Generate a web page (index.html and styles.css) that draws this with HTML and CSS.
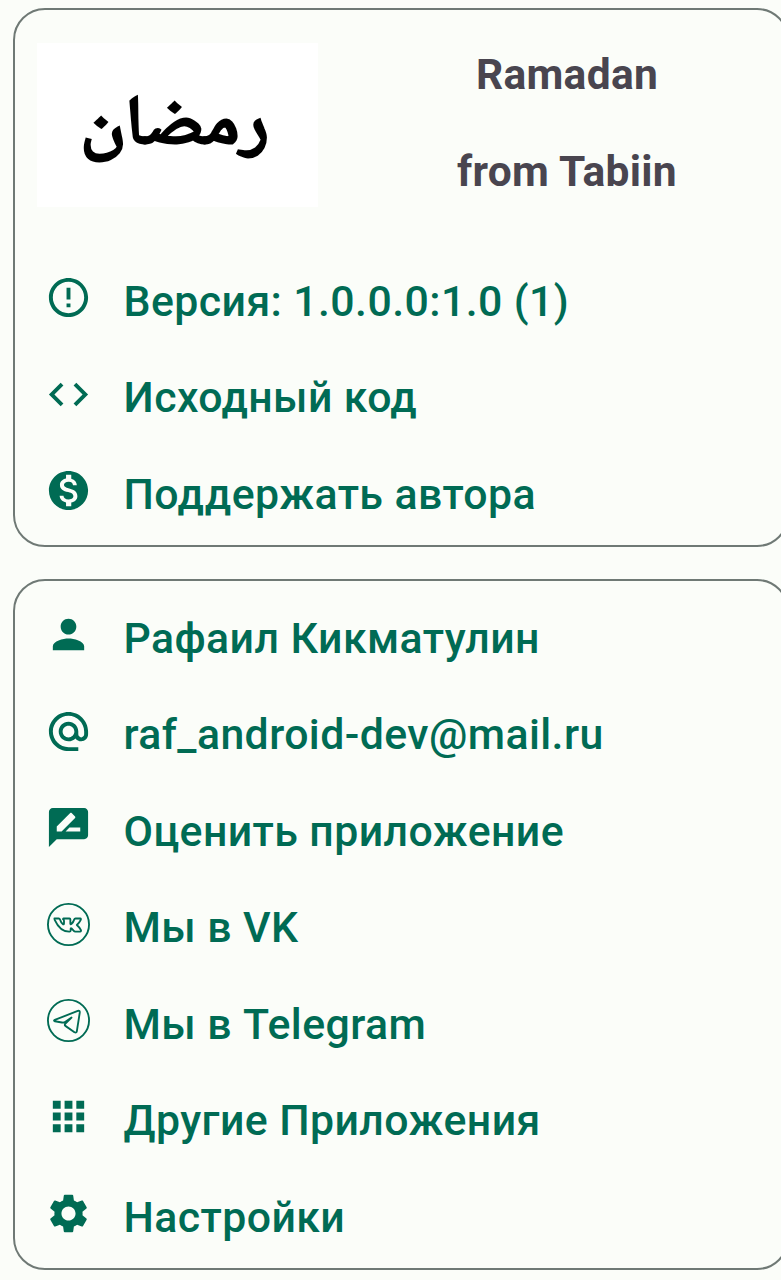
FILE: index.html
```html
<!DOCTYPE html>
<html lang="ru">
<head>
<meta charset="utf-8">
<title>Ramadan</title>
<link rel="stylesheet" href="styles.css">
</head>
<body>
<main class="page">
  <section class="card about">
    <header class="head">
      <div class="logo"><span class="word" lang="ar" dir="rtl">رمضان</span></div>
      <h1 class="title"><span>Ramadan</span><span>from Tabiin</span></h1>
    </header>
    <ul class="list">
      <li class="row"><svg class="icon" viewBox="0 0 24 24"><path d="M11 15h2v2h-2zm0-8h2v6h-2zm.99-5C6.47 2 2 6.48 2 12s4.47 10 9.99 10C17.52 22 22 17.52 22 12S17.52 2 11.99 2zM12 20c-4.42 0-8-3.58-8-8s3.58-8 8-8 8 3.58 8 8-3.58 8-8 8z"/></svg><span class="label">Версия: 1.0.0.0:1.0 (1)</span></li>
      <li class="row"><svg class="icon" viewBox="0 0 24 24"><path d="M9.4 16.6L4.800 12l4.600-4.600L8 6l-6 6 6 6zm5.200 0l4.600-4.600-4.600-4.600L16 6l6 6-6 6z"/></svg><span class="label">Исходный код</span></li>
      <li class="row"><svg class="icon" viewBox="0 0 24 24"><path d="M12 2C6.480 2 2 6.480 2 12s4.480 10 10 10 10-4.480 10-10S17.520 2 12 2zm1.410 16.090V20h-2.670v-1.930c-1.710-.36-3.160-1.460-3.270-3.400h1.960c.1 1.050.82 1.870 2.650 1.870 1.960 0 2.400-.98 2.400-1.590 0-.83-.44-1.610-2.670-2.140-2.480-.6-4.180-1.620-4.180-3.670 0-1.720 1.390-2.840 3.110-3.210V4h2.670v1.950c1.860.45 2.790 1.860 2.850 3.390H14.300c-.05-1.110-.64-1.870-2.220-1.870-1.500 0-2.400.68-2.400 1.640 0 .84.65 1.390 2.670 1.910s4.180 1.390 4.180 3.910c-.01 1.830-1.380 2.830-3.120 3.160z"/></svg><span class="label">Поддержать автора</span></li>
    </ul>
  </section>
  <section class="card links">
    <ul class="list">
      <li class="row"><svg class="icon" viewBox="0 0 24 24"><path d="M12 12c2.210 0 4-1.790 4-4s-1.790-4-4-4-4 1.790-4 4 1.790 4 4 4zm0 2c-2.670 0-8 1.340-8 4v2h16v-2c0-2.660-5.330-4-8-4z"/></svg><span class="label">Рафаил Кикматулин</span></li>
      <li class="row"><svg class="icon" viewBox="0 0 24 24"><path d="M12 2C6.480 2 2 6.480 2 12s4.480 10 10 10h5v-2h-5c-4.340 0-8-3.660-8-8s3.660-8 8-8 8 3.660 8 8v1.430c0 .79-.71 1.570-1.500 1.570s-1.500-.78-1.500-1.570V12c0-2.760-2.240-5-5-5s-5 2.240-5 5 2.240 5 5 5c1.380 0 2.640-.56 3.540-1.470.65.89 1.770 1.470 2.960 1.470 1.970 0 3.500-1.600 3.500-3.570V12c0-5.520-4.480-10-10-10zm0 13c-1.660 0-3-1.340-3-3s1.340-3 3-3 3 1.340 3 3-1.340 3-3 3z"/></svg><span class="label">raf_android-dev@mail.ru</span></li>
      <li class="row"><svg class="icon" viewBox="0 0 24 24"><path d="M20 2H4c-1.100 0-1.990.9-1.990 2L2 22l4-4h14c1.100 0 2-.9 2-2V4c0-1.100-.9-2-2-2zM6 14v-2.470l6.880-6.880c.2-.2.51-.2.71 0l1.770 1.770c.2.2.2.51 0 .71L8.470 14H6zm12 0h-7.500l2-2H18v2z"/></svg><span class="label">Оценить приложение</span></li>
      <li class="row"><svg class="icon line" viewBox="0 0 48 48"><circle cx="24" cy="24" r="21"/><path d="M9.600 17.900h4.400q1 0 1.300 1 1 3.200 3.100 4.900 1 .4 1-1v-2.600q0-1-1-1.600-.2-.6.600-.7h6q.9 0 .9 1v4.400q.2.900 1 .300 2-1.800 3-4.800.3-.9 1.200-.9h4.800q1.200.2.600 1.300-1.300 2.800-4 5.300 2.600 2.200 4.200 5.200.5 1.400-.9 1.600h-4.800q-1 0-1.600-.8l-2.300-2.500q-.9-.7-.9.500v1.900q-.1.900-1.100.900-9.500.3-15.200-12.100-.5-1.200.5-1.300z"/></svg><span class="label">Мы в VK</span></li>
      <li class="row"><svg class="icon line" viewBox="0 0 48 48"><circle cx="24" cy="24" r="21"/><path d="M10 23.400l23.500-9.200q2.300-.7 2 1.800l-3 19q-.5 2-2.400 1l-9.300-6.500q-1-.8-.2-2l6.500-6.500-7 4.700q-1.300.8-2.800.3l-7.200-1.200q-1.700-.6-.1-1.400z"/></svg><span class="label">Мы в Telegram</span></li>
      <li class="row"><svg class="icon" viewBox="0 0 24 24"><path d="M4 8h4V4H4v4zm6 12h4v-4h-4v4zm-6 0h4v-4H4v4zm0-6h4v-4H4v4zm6 0h4v-4h-4v4zm6-10v4h4V4h-4zm-6 4h4V4h-4v4zm6 6h4v-4h-4v4zm0 6h4v-4h-4v4z"/></svg><span class="label">Другие Приложения</span></li>
      <li class="row"><svg class="icon" viewBox="0 0 24 24"><path d="M19.140 12.940c.04-.3.06-.61.06-.94 0-.32-.02-.64-.07-.94l2.030-1.580c.18-.14.23-.41.12-.61l-1.920-3.320c-.12-.22-.37-.29-.59-.22l-2.390.96c-.5-.38-1.030-.7-1.620-.94L14.400 2.810c-.04-.24-.24-.41-.48-.41h-3.840c-.24 0-.43.17-.47.41L9.250 5.350C8.660 5.590 8.120 5.920 7.630 6.290L5.240 5.330c-.22-.08-.47 0-.59.22L2.740 8.870c-.12.21-.08.47.12.61l2.030 1.580C4.840 11.360 4.800 11.690 4.800 12s.02.64.07.94l-2.030 1.580c-.18.14-.23.41-.12.61l1.920 3.320c.12.22.37.29.59.22l2.390-.96c.5.38 1.030.7 1.620.94l.36 2.540c.05.24.24.41.48.41h3.840c.24 0 .44-.17.47-.41l.36-2.540c.59-.24 1.130-.56 1.620-.94l2.390.96c.22.08.47 0 .59-.22l1.920-3.320c.12-.22.07-.47-.12-.61l-2.010-1.580zM12 15.600c-1.980 0-3.600-1.620-3.600-3.600s1.620-3.600 3.600-3.600 3.600 1.620 3.600 3.600-1.620 3.600-3.600 3.600z"/></svg><span class="label">Настройки</span></li>
    </ul>
  </section>
</main>
</body>
</html>
```
FILE: styles.css
```css
* { box-sizing: border-box; }
body { margin: 0; background: #fbfdf9; overflow: hidden; font-family: Roboto, "Noto Sans", sans-serif; }
.page { width: 789px; padding: 8px 0 0 13px; display: flex; flex-direction: column; gap: 32px; }
.card { border: 2px solid #6f7975; border-radius: 32px; }
.about { height: 539px; }
.links { height: 691px; padding-top: 8px; }
.head { display: flex; height: 242px; padding: 33px 0 0 22px; }
.logo { flex: none; width: 281px; height: 164px; background: #fff; color: #000; display: flex; align-items: center; justify-content: center; font: 400 68px "Noto Naskh Arabic", "Amiri", "DejaVu Sans", serif; -webkit-text-stroke: 3px #000; }
.word { transform: translate(-3px, 3px) scaleX(1.13); }
.title { flex: none; margin: -17px 0 0; width: 498px; display: flex; flex-direction: column; align-items: center; color: #49454f; font-size: 42.500px; line-height: 97px; font-weight: 700; letter-spacing: .3px; }
.list { list-style: none; margin: 0; padding: 0; }
.row { height: 96.450px; padding-left: 30px; display: flex; align-items: center; gap: 31.500px; color: #006b54; font-size: 42.800px; letter-spacing: .42px; font-weight: 500; white-space: pre; }
.label { padding-top: 1.500px; }
.icon { width: 47px; height: 47px; margin-bottom: 5px; flex: none; fill: currentColor; }
.line { fill: none; stroke: currentColor; stroke-width: 1.900; stroke-linejoin: round; }
```
